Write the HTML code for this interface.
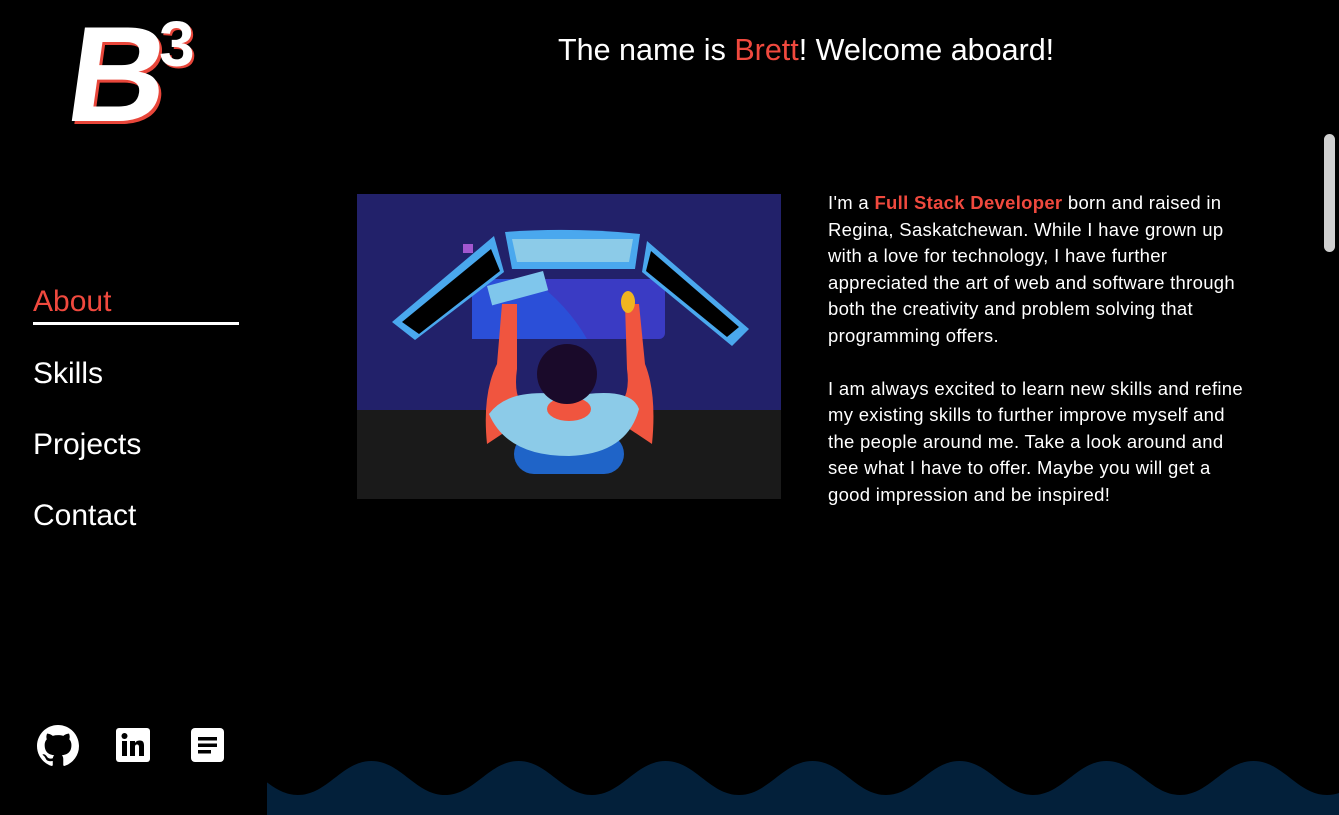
<!DOCTYPE html>
<html><head><meta charset="utf-8"><style>
*{margin:0;padding:0;box-sizing:border-box}
body{width:1339px;height:815px;background:#000;overflow:hidden;position:relative;font-family:"Liberation Sans",sans-serif;color:#fff}
.abs{position:absolute}
h1{position:absolute;left:558px;top:33px;font-size:30.5px;font-weight:normal;white-space:nowrap}
.red{color:#f0493e}
.nav{position:absolute;left:33px;font-size:30px;white-space:nowrap}
.txt{position:absolute;left:828px;top:190px;font-size:18.5px;line-height:26.5px;white-space:nowrap;letter-spacing:0.3px}
</style></head><body>
<svg class="abs" style="left:55px;top:5px" width="160" height="130" viewBox="0 0 160 130">
<g transform="translate(2,0) skewX(-8)">
<text x="22" y="116" font-family="Liberation Sans" font-weight="bold" font-size="136" fill="#e8463a" transform="translate(3,3)">B</text>
<text x="22" y="116" font-family="Liberation Sans" font-weight="bold" font-size="136" fill="#fff">B</text>
</g>
<text x="104" y="61" font-family="Liberation Sans" font-weight="bold" font-size="64" fill="#e8463a" transform="translate(2,2)">3</text>
<text x="104" y="61" font-family="Liberation Sans" font-weight="bold" font-size="64" fill="#fff">3</text>
</svg>
<h1>The name is <span class="red">Brett</span>! Welcome aboard!</h1>
<div class="nav red" style="top:285px">About</div>
<div class="abs" style="left:33px;top:322px;width:206px;height:3px;background:#fff"></div>
<div class="nav" style="top:357px">Skills</div>
<div class="nav" style="top:428px">Projects</div>
<div class="nav" style="top:499px">Contact</div>

<svg class="abs" style="left:357px;top:194px" width="424" height="305" viewBox="0 0 424 305">
<rect width="424" height="216" fill="#22216a"/>
<rect y="216" width="424" height="89" fill="#1a1a1a"/>
<rect x="115" y="85" width="193" height="60" rx="6" fill="#3a3bc4"/>
<path d="M175 85 Q210 110 230 145 L115 145 L115 85Z" fill="#2b4fd8"/>
<path d="M148 38 Q215 33 283 40 L278 75 L155 75Z" fill="#4aa8ee"/>
<path d="M155 45 L276 45 L272 68 L160 68Z" fill="#8ccbe8"/>
<path d="M35 128 L137 42 L147 78 L58 146Z" fill="#4aa8ee"/>
<path d="M45 128 L134 55 L143 77 L62 140Z" fill="#000"/>
<path d="M392 135 L290 47 L285 78 L375 152Z" fill="#4aa8ee"/>
<path d="M382 133 L294 57 L289 77 L370 143Z" fill="#000"/>
<rect x="106" y="50" width="10" height="9" fill="#a257d0"/>
<rect x="130" y="92" width="58" height="20" fill="#7fc6ec" transform="rotate(-15 130 92)"/>
<path d="M130 250 Q125 200 140 170 L145 110 L160 110 L160 175 Q155 210 175 220Z" fill="#f0553f"/>
<path d="M295 250 Q300 200 288 170 L282 110 L268 110 L270 175 Q275 210 250 220Z" fill="#f0553f"/>
<ellipse cx="271" cy="108" rx="7" ry="11" fill="#f0b520"/>
<rect x="157" y="240" width="110" height="40" rx="20" fill="#1f64c8"/>
<path d="M132 220 Q150 195 200 200 L230 200 Q275 195 282 215 Q270 260 212 262 Q150 262 132 220Z" fill="#8ccbe8"/>
<ellipse cx="212" cy="215" rx="22" ry="12" fill="#f0553f"/>
<circle cx="210" cy="180" r="30" fill="#1a0a2a"/>
</svg>

<div class="txt">I'm a <b class="red">Full Stack Developer</b> born and raised in<br>Regina, Saskatchewan. While I have grown up<br>with a love for technology, I have further<br>appreciated the art of web and software through<br>both the creativity and problem solving that<br>programming offers.<br><br>I am always excited to learn new skills and refine<br>my existing skills to further improve myself and<br>the people around me. Take a look around and<br>see what I have to offer. Maybe you will get a<br>good impression and be inspired!</div>

<svg class="abs" style="left:37px;top:725px" width="42" height="42" viewBox="0 0 16 16"><path fill="#fff" d="M8 0C3.580 0 0 3.58 0 8c0 3.54 2.29 6.53 5.470 7.590.4.07.55-.17.55-.38 0-.19-.01-.82-.01-1.49-2.01.37-2.53-.49-2.690-.94-.09-.23-.48-.94-.82-1.130-.28-.15-.68-.52-.01-.53.63-.01 1.08.58 1.23.82.72 1.21 1.87.87 2.33.66.07-.52.28-.87.51-1.070-1.78-.2-3.64-.89-3.640-3.95 0-.87.31-1.59.82-2.150-.08-.2-.36-1.02.08-2.12 0 0 .67-.21 2.2.82.64-.18 1.32-.27 2-.27.68 0 1.36.09 2 .27 1.53-1.04 2.2-.82 2.2-.82.44 1.1.16 1.92.08 2.12.51.56.82 1.27.82 2.15 0 3.07-1.87 3.75-3.65 3.95.29.25.54.73.54 1.48 0 1.07-.01 1.93-.01 2.2 0 .21.15.46.55.38A8.013 8.013 0 0016 8c0-4.42-3.58-8-8-8z"/></svg>
<svg class="abs" style="left:116px;top:728px" width="34" height="34" viewBox="0 0 34 34"><rect width="34" height="34" rx="3" fill="#fff"/><rect x="6" y="13" width="5" height="15" fill="#000"/><circle cx="8.5" cy="8" r="3" fill="#000"/><path d="M14 13h5v2c1-2 3-2.5 5-2.5 3 0 4 2 4 5V28h-5v-9c0-2-1-2.5-2-2.5s-2 .5-2 2.5v9h-5z" fill="#000"/></svg>
<svg class="abs" style="left:191px;top:728px" width="33" height="34" viewBox="0 0 33 34"><rect width="33" height="34" rx="4" fill="#fff"/><rect x="7" y="9" width="19" height="3.5" fill="#000"/><rect x="7" y="15.5" width="19" height="3.5" fill="#000"/><rect x="7" y="22" width="13" height="3.5" fill="#000"/></svg>

<svg class="abs" style="left:267px;top:745px" width="1072" height="70" viewBox="0 0 1072 70"><path fill="#03203a" d="M-116 50 c29.4 0 44.1 -34 73.5 -34 c29.4 0 44.1 34 73.5 34 c29.4 0 44.1 -34 73.5 -34 c29.4 0 44.1 34 73.5 34 c29.4 0 44.1 -34 73.5 -34 c29.4 0 44.1 34 73.5 34 c29.4 0 44.1 -34 73.5 -34 c29.4 0 44.1 34 73.5 34 c29.4 0 44.1 -34 73.5 -34 c29.4 0 44.1 34 73.5 34 c29.4 0 44.1 -34 73.5 -34 c29.4 0 44.1 34 73.5 34 c29.4 0 44.1 -34 73.5 -34 c29.4 0 44.1 34 73.5 34 c29.4 0 44.1 -34 73.5 -34 c29.4 0 44.1 34 73.5 34 c29.4 0 44.1 -34 73.5 -34 c29.4 0 44.1 34 73.5 34 L1200 70 L-116 70Z"/></svg>
<div class="abs" style="left:1324px;top:134px;width:11px;height:118px;border-radius:6px;background:#d0d0d0"></div>
</body></html>
